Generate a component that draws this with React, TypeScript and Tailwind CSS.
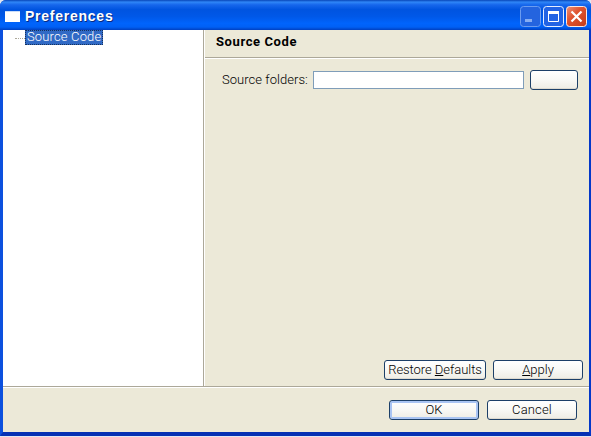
import type { ReactNode } from "react";

function XpButton({ className, focused, children }: { className: string; focused?: boolean; children?: ReactNode }) {
  return (
    <button
      className={`flex h-5 shrink-0 items-center justify-center whitespace-nowrap rounded-[3px] border border-[#1c3f68] bg-linear-to-b from-white via-[#f8f8f5] to-[#eeece4] pb-[2px] text-[13px] font-light leading-none text-black ${
        focused ? "shadow-[inset_0_0_0_2px_#a9c4f3]" : "shadow-[inset_0_-1px_0_#dedad0]"
      } ${className}`}
    >
      {children}
    </button>
  );
}

function TitleBar() {
  return (
    <header className="flex h-[30px] shrink-0 items-center rounded-t-[6px] bg-[linear-gradient(180deg,#0846b8_0%,#2f86f7_7%,#1767ec_16%,#0054e0_32%,#0058e8_55%,#0064fc_78%,#0060f5_90%,#0040c0_100%)] pl-[5px] pr-[4px] pt-[3px]">
      <div className="h-[11px] w-[15px] border-t border-[#c9dcf8] bg-white" />
      <h1 className="ml-[5px] whitespace-nowrap pb-px font-['Liberation_Sans',sans-serif] text-[14px] font-bold leading-none tracking-[0.75px] text-white [text-shadow:1px_1px_0_#0a2a80]">
        Preferences
      </h1>
      <div className="ml-auto flex gap-[2px]">
        <svg width="21" height="21" viewBox="0 0 21 21">
          <rect x=".5" y=".5" width="20" height="20" rx="3" fill="#2464df" stroke="#6b9cf0" />
          <path d="M5 14.5h7" stroke="#86adf3" strokeWidth="3" />
        </svg>
        <svg width="21" height="21" viewBox="0 0 21 21">
          <rect x=".5" y=".5" width="20" height="20" rx="3" fill="#2263e4" stroke="#e4edff" />
          <path d="M5.5 5v10.5h10V5" fill="none" stroke="#fff" />
          <path d="M5 6.5h11" stroke="#fff" strokeWidth="3" />
        </svg>
        <svg width="21" height="21" viewBox="0 0 21 21">
          <defs>
            <linearGradient id="close" x2="1" y2="1">
              <stop stopColor="#ee9278" />
              <stop offset=".4" stopColor="#df5430" />
              <stop offset="1" stopColor="#c33a16" />
            </linearGradient>
          </defs>
          <rect x=".5" y=".5" width="20" height="20" rx="3" fill="url(#close)" stroke="#fae8e2" />
          <path d="M5.5 5.5l10 10m0-10l-10 10" stroke="#fff" strokeWidth="2.2" />
        </svg>
      </div>
    </header>
  );
}

export default function App() {
  return (
    <div className="h-[437px] w-[591px] overflow-hidden bg-[#e2e6f0] font-[Roboto,sans-serif] text-[13px] leading-none text-black">
      <div className="flex h-[436px] flex-col rounded-t-[6px] bg-[#0846d2]">
        <TitleBar />
        <div className="flex min-h-0 flex-1 flex-col border-b-4 border-l-[3px] border-r-2 border-b-[#0530b4] border-l-[#0c50de] border-r-[#0438c8] bg-[#ece9d8]">
          <main className="flex h-[356px] shrink-0">
            <nav className="flex w-[200px] shrink-0 items-start bg-white">
              <div className="ml-3 mt-[8px] w-[10px] border-t border-dotted border-[#aca899]" />
              <div className="flex h-[15px] w-[78px] items-center whitespace-nowrap border border-dotted border-[#e0a040] bg-[#316ac5] pb-[2px] pl-px font-light tracking-[0.15px] text-white outline-1 -outline-offset-1 outline-dotted outline-[#16325c]">
                Source Code
              </div>
            </nav>
            <div className="w-[2px] shrink-0 border-l border-r border-l-[#aca899] border-r-white" />
            <section className="flex min-w-0 flex-1 flex-col">
              <div className="flex h-[29px] shrink-0 items-center border-b border-white pb-[6px] shadow-[inset_0_-1px_0_#aca899]">
                <h2 className="ml-[11px] whitespace-nowrap text-[13px] font-bold tracking-[0.6px]">Source Code</h2>
              </div>
              <div className="mt-[11px] flex h-5 items-center pl-[17px]">
                <label className="w-[91px] whitespace-nowrap pb-[2px] font-light tracking-[0.05px]">Source folders:</label>
                <div className="h-[18px] w-[211px] border border-[#7f9db9] bg-white" />
                <XpButton className="ml-[6px] w-[48px]" />
              </div>
              <div className="mb-[6px] mr-[6px] mt-auto flex justify-end gap-[7px]">
                <XpButton className="w-[102px] tracking-[-0.05px]">
                  <span>Restore <u className="underline-offset-1">D</u>efaults</span>
                </XpButton>
                <XpButton className="w-[90px] tracking-[0px]">
                  <span><u className="underline-offset-1">A</u>pply</span>
                </XpButton>
              </div>
            </section>
          </main>
          <footer className="flex flex-1 items-start justify-end gap-2 border-t border-[#aca899] pr-3 pt-[13px] shadow-[inset_0_1px_0_white]">
            <XpButton focused className="w-[90px] tracking-[0px]">OK</XpButton>
            <XpButton className="w-[90px] tracking-[0.15px]">Cancel</XpButton>
          </footer>
        </div>
      </div>
    </div>
  );
}
